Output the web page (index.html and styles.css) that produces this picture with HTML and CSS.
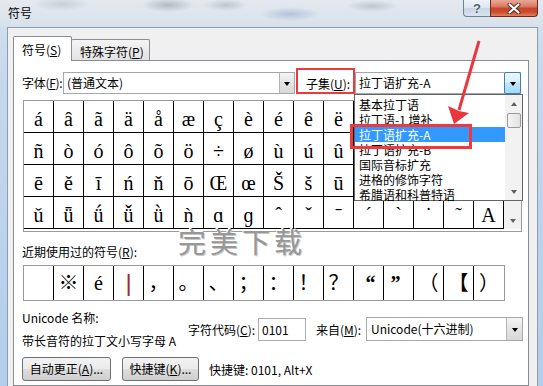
FILE: index.html
```html
<!DOCTYPE html>
<html lang="zh-CN">
<head>
<meta charset="utf-8">
<title>符号</title>
<link rel="stylesheet" href="styles.css">
</head>
<body>
<div class="window">
  <div class="titlebar">
    <span class="title">符号</span>
    <div class="caption">
      <div class="cbtn help">?</div>
      <div class="cbtn close">
        <svg width="14" height="11" viewBox="0 0 14 11"><path d="M2.5 1.5 L11.5 9.5 M11.5 1.5 L2.5 9.5" stroke="#4a2a24" stroke-width="4" stroke-linecap="round"/><path d="M2.5 1.5 L11.5 9.5 M11.5 1.5 L2.5 9.5" stroke="#ffffff" stroke-width="2.2" stroke-linecap="round"/></svg>
      </div>
    </div>
  </div>
  <div class="client">
    <div class="tabs">
      <div class="tab active">符号(<u>S</u>)</div>
      <div class="tab">特殊字符(<u>P</u>)</div>
    </div>
    <div class="panel">
      <div class="font-row">
        <span class="lbl-font">字体(<u>F</u>):</span>
        <div class="combo font-combo"><span class="combo-text">(普通文本)</span><span class="dd"><i class="tri"></i></span></div>
        <span class="lbl-subset">子集(<u>U</u>):</span>
        <div class="combo subset-combo"><span class="combo-text">拉丁语扩充-A</span><span class="dd hot"><i class="tri"></i></span>
          <div class="droplist">
            <div class="items">
              <div class="item">基本拉丁语</div>
              <div class="item">拉丁语-1 增补</div>
              <div class="item sel">拉丁语扩充-A</div>
              <div class="item">拉丁语扩充-B</div>
              <div class="item">国际音标扩充</div>
              <div class="item">进格的修饰字符</div>
              <div class="item">希腊语和科普特语</div>
            </div>
            <div class="lscroll"><span class="sb-btn"><i class="up"></i></span><span class="thumb"></span><span class="sb-fill"></span><span class="sb-btn"><i class="down"></i></span></div>
            <div class="mark"></div>
          </div>
        </div>
      </div>
      <div class="grid">
        <div class="cells">
          <span>á</span><span>â</span><span>ã</span><span>ä</span><span>å</span><span>æ</span><span>ç</span><span>è</span><span>é</span><span>ê</span><span>ë</span><span></span><span></span><span></span><span></span><span></span>
          <span>ñ</span><span>ò</span><span>ó</span><span>ô</span><span>õ</span><span>ö</span><span>÷</span><span>ø</span><span>ù</span><span>ú</span><span>û</span><span></span><span></span><span></span><span></span><span class="selected"></span>
          <span>ē</span><span>ě</span><span>ī</span><span>ń</span><span>ň</span><span>ō</span><span>Œ</span><span>œ</span><span>Š</span><span>š</span><span>ū</span><span></span><span></span><span></span><span></span><span></span>
          <span>ǔ</span><span>ǖ</span><span>ǘ</span><span>ǚ</span><span>ǜ</span><span>ǹ</span><span>ɑ</span><span>ɡ</span><span>ˆ</span><span>ˇ</span><span>ˉ</span><span>ˊ</span><span>ˋ</span><span>˙</span><span>˜</span><span>Α</span>
        </div>
        <div class="gscroll"><span class="sb-btn"><i class="up"></i></span><span class="sb-fill"></span><span class="sb-btn"><i class="down"></i></span></div>
      </div>
      <div class="recent-lbl">近期使用过的符号(<u>R</u>):</div>
      <div class="recent">
        <span></span><span>※</span><span class="lat">é</span><span class="bar">|</span><span>，</span><span>。</span><span>、</span><span>；</span><span>：</span><span>！</span><span>？</span><span class="qo">“</span><span class="qc">”</span><span>（</span><span>【</span><span>）</span>
      </div>
      <div class="info-row">
        <div class="uname"><div>Unicode 名称:</div><div>带长音符的拉丁文小写字母 A</div></div>
        <span class="lbl-code">字符代码(<u>C</u>):</span>
        <div class="input">0101</div>
        <span class="lbl-from">来自(<u>M</u>):</span>
        <div class="combo from-combo"><span class="combo-text">Unicode(十六进制)</span><span class="dd"><i class="tri"></i></span></div>
      </div>
      <div class="btn-row">
        <button class="btn btn-auto">自动更正(<u>A</u>)...</button>
        <button class="btn btn-key">快捷键(<u>K</u>)...</button>
        <span class="shortcut">快捷键: 0101, Alt+X</span>
      </div>
    </div>
  </div>
  <div class="watermark">完美下载</div>
  <svg class="annot" width="543" height="386" viewBox="0 0 543 386">
    <line x1="479" y1="41" x2="459" y2="110" stroke="#e8383d" stroke-width="3"/>
    <polygon points="454,124 448,106 459,111 469,113" fill="#e8383d"/>
  </svg>
</div>
</body>
</html>
```
FILE: styles.css
```css
* { box-sizing: border-box; }
body {
  margin: 0;
  width: 543px;
  height: 386px;
  overflow: hidden;
  font-family: "Noto Sans CJK SC", "Liberation Sans", sans-serif;
  font-size: 12px;
  color: #000;
}
u { text-decoration: underline; text-underline-offset: 1px; }

.window {
  position: relative;
  width: 543px;
  height: 386px;
  display: flex;
  flex-direction: column;
  overflow: hidden;
  background: linear-gradient(180deg, #d6e1ed 0px, #c6d8ec 80px, #b2cdeb 386px);
}

.titlebar {
  height: 27px;
  flex: none;
  display: flex;
  align-items: flex-start;
  padding-left: 8px;
  background:
    radial-gradient(ellipse 28px 7px at 62px 4px, rgba(150,160,170,0.35), transparent),
    radial-gradient(ellipse 26px 7px at 168px 5px, rgba(90,100,110,0.35), transparent),
    radial-gradient(ellipse 22px 6px at 226px 5px, rgba(110,120,130,0.3), transparent),
    radial-gradient(ellipse 30px 7px at 290px 14px, rgba(80,120,170,0.3), transparent),
    radial-gradient(ellipse 26px 6px at 372px 6px, rgba(110,120,130,0.3), transparent),
    linear-gradient(180deg, #e4e9ef, #d8e1eb);
}
.title { line-height: 26px; font-size: 12px; }
.caption { margin-left: auto; margin-right: 5px; display: flex; }
.cbtn { height: 17px; display: flex; align-items: center; justify-content: center; }
.help {
  width: 27px;
  border: 1px solid #6f8198;
  border-top: none;
  border-right: none;
  border-radius: 0 0 0 4px;
  background: linear-gradient(180deg, #eef3f8 0%, #dce5ee 50%, #c8d5e3 52%, #d7e3f0 100%);
  color: #4c5d73;
  font: bold 13px/15px "Liberation Sans", sans-serif;
  text-shadow: 0 0 1px #fff, 0 0 2px #fff;
}
.close {
  width: 48px;
  border: 1px solid #6e2a1e;
  border-top: none;
  border-radius: 0 0 4px 0;
  background: linear-gradient(180deg, #e9a898 0%, #da7b64 40%, #c8452b 52%, #cc4c2e 75%, #e1825f 100%);
}

.client {
  flex: 1;
  margin: 0 5px 0 7px;
  border: 1px solid #8d9db2;
  border-bottom: none;
  background: #f0f0f0;
  padding: 8px 8px 0 5px;
  display: flex;
  flex-direction: column;
}

.tabs { display: flex; align-items: flex-end; height: 25px; margin-bottom: -1px; }
.tab {
  border: 1px solid #898c95;
  border-bottom: none;
  border-radius: 2px 2px 0 0;
  line-height: 14px;
  white-space: nowrap;
}
.tab.active {
  position: relative;
  z-index: 1;
  width: 59px;
  height: 25px;
  background: #ffffff;
  padding: 6px 0 0 8px;
}
.tab:not(.active) {
  width: 79px;
  height: 22px;
  margin-left: -1px;
  padding: 5px 0 0 8px;
  background: linear-gradient(180deg, #f4f4f4, #e2e2e2);
}

.panel {
  flex: 1;
  border: 1px solid #898c95;
  background: #ffffff;
  padding: 7px 0 0 8px;
}

.font-row { display: flex; align-items: flex-end; height: 26px; }
.lbl-font { width: 41px; flex: none; line-height: 22px; white-space: nowrap; letter-spacing: -0.3px; }
.combo {
  height: 22px;
  flex: none;
  border: 1px solid #a3a7ae;
  background: #fff;
  display: flex;
  align-items: stretch;
}
.combo-text { flex: 1; padding-left: 3px; line-height: 20px; white-space: nowrap; overflow: hidden; }
.dd {
  width: 15px;
  flex: none;
  border-left: 1px solid #b4b4b4;
  background: linear-gradient(180deg, #f4f4f4, #e4e4e4 50%, #d8d8d8);
  display: flex;
  align-items: center;
  justify-content: center;
}
.dd.hot {
  width: 17px;
  margin: -1px -1px -1px 0;
  border: 1px solid #3c7fb1;
  border-radius: 2px;
  background: linear-gradient(180deg, #eaf6fd, #d9f0fc 45%, #bee6fd 50%, #a7d9f5);
}
.tri {
  width: 0;
  height: 0;
  border-left: 3.5px solid transparent;
  border-right: 3.5px solid transparent;
  border-top: 4px solid #000;
  margin-top: 1px;
}
.font-combo { width: 232px; }
.lbl-subset {
  width: 59px;
  height: 26px;
  flex: none;
  margin-left: 1px;
  border: 2px solid #ee3a3c;
  padding: 6px 0 0 8px;
  line-height: 16px;
  white-space: nowrap;
}
.subset-combo { width: 166px; position: relative; }

.droplist {
  position: absolute;
  top: 21px;
  left: -2px;
  width: 169px;
  height: 107px;
  border: 1px solid #646464;
  background: #fff;
  display: flex;
  z-index: 5;
}
.items { flex: 1; padding-top: 2px; }
.item { height: 15px; line-height: 15px; padding-left: 4px; white-space: nowrap; overflow: hidden; }
.item.sel { background: #3399ff; color: #fff; }
.lscroll, .gscroll {
  width: 17px;
  flex: none;
  display: flex;
  flex-direction: column;
  background: #f2f2f2;
}
.sb-btn { height: 17px; flex: none; display: flex; align-items: center; justify-content: center; }
.sb-fill { flex: 1; }
.thumb {
  height: 15px;
  margin: 1px 1px 0 2px;
  border: 1px solid #9a9a9a;
  border-radius: 2px;
  background: linear-gradient(90deg, #f4f4f4, #e2e2e2);
}
.up, .down { width: 0; height: 0; border-left: 3.5px solid transparent; border-right: 3.5px solid transparent; }
.up { border-bottom: 4px solid #606060; }
.down { border-top: 4px solid #606060; }
.mark {
  position: absolute;
  left: -5px;
  top: 29px;
  width: 122px;
  height: 25px;
  border: 3px solid #ee3a3c;
}

.grid {
  margin: 6px 0 0 1px;
  width: 499px;
  height: 132px;
  border: 1px solid #9a9a9a;
  background: #fff;
  display: flex;
  padding-bottom: 2px;
}
.cells {
  display: grid;
  grid-template-columns: repeat(16, 30px);
  grid-auto-rows: 32px;
  align-content: start;
}
.cells span {
  border-right: 1px solid #000;
  border-bottom: 1px solid #000;
  display: flex;
  align-items: center;
  justify-content: center;
  padding-top: 5px;
  font: 20px/22px "Liberation Serif", "DejaVu Serif", serif;
}

.recent-lbl { margin-top: 13px; line-height: 14px; }
.recent {
  margin: 6px 0 0 1px;
  width: 482px;
  height: 36px;
  border: 1px solid #9a9a9a;
  background: #fff;
  display: grid;
  grid-template-columns: repeat(16, 30px);
}
.recent span {
  border-right: 1px solid #000;
  display: flex;
  align-items: center;
  justify-content: center;
  font: 20px/26px "Liberation Serif", "Noto Sans CJK SC", serif;
}
.recent span:last-child { border-right: none; }
.recent .bar { font: 24px/26px "Liberation Sans", sans-serif; color: #a3282b; }
.recent .qo { font-weight: bold; padding-left: 4px; }
.recent .qc { font-weight: bold; padding-right: 6px; }

.info-row { margin-top: 5px; display: flex; align-items: center; height: 46px; }
.uname { width: 166px; flex: none; line-height: 23px; white-space: nowrap; }
.lbl-code { width: 70px; flex: none; white-space: nowrap; }
.input {
  width: 48px;
  height: 23px;
  flex: none;
  border: 1px solid #abadb3;
  background: #fff;
  padding-left: 3px;
  line-height: 21px;
}
.lbl-from { margin-left: 10px; width: 50px; flex: none; white-space: nowrap; }
.from-combo { width: 157px; height: 24px; }
.from-combo .combo-text { line-height: 22px; padding-left: 4px; }
.from-combo .dd { width: 16px; }

.btn-row { margin-top: 5px; display: flex; align-items: center; }
.btn {
  height: 24px;
  border: 1px solid #707070;
  border-radius: 3px;
  background: linear-gradient(180deg, #f2f2f2 0%, #ebebeb 50%, #dddddd 51%, #cfcfcf 100%);
  font-family: "Noto Sans CJK SC", "Liberation Sans", sans-serif;
  font-size: 12px;
  color: #000;
  padding: 0;
  line-height: 20px;
  white-space: nowrap;
}
.btn-auto { width: 89px; }
.btn-key { width: 77px; margin-left: 11px; }
.shortcut { margin-left: 10px; white-space: nowrap; }

.watermark {
  position: absolute;
  left: 178px;
  top: 225px;
  font-size: 28px;
  line-height: 32px;
  letter-spacing: 4px;
  color: #979797;
  text-shadow: 1px 1px 0 #c8c8c8, -1px -1px 0 #ffffff;
  z-index: 6;
}
.annot { position: absolute; left: 0; top: 0; z-index: 7; }
```
